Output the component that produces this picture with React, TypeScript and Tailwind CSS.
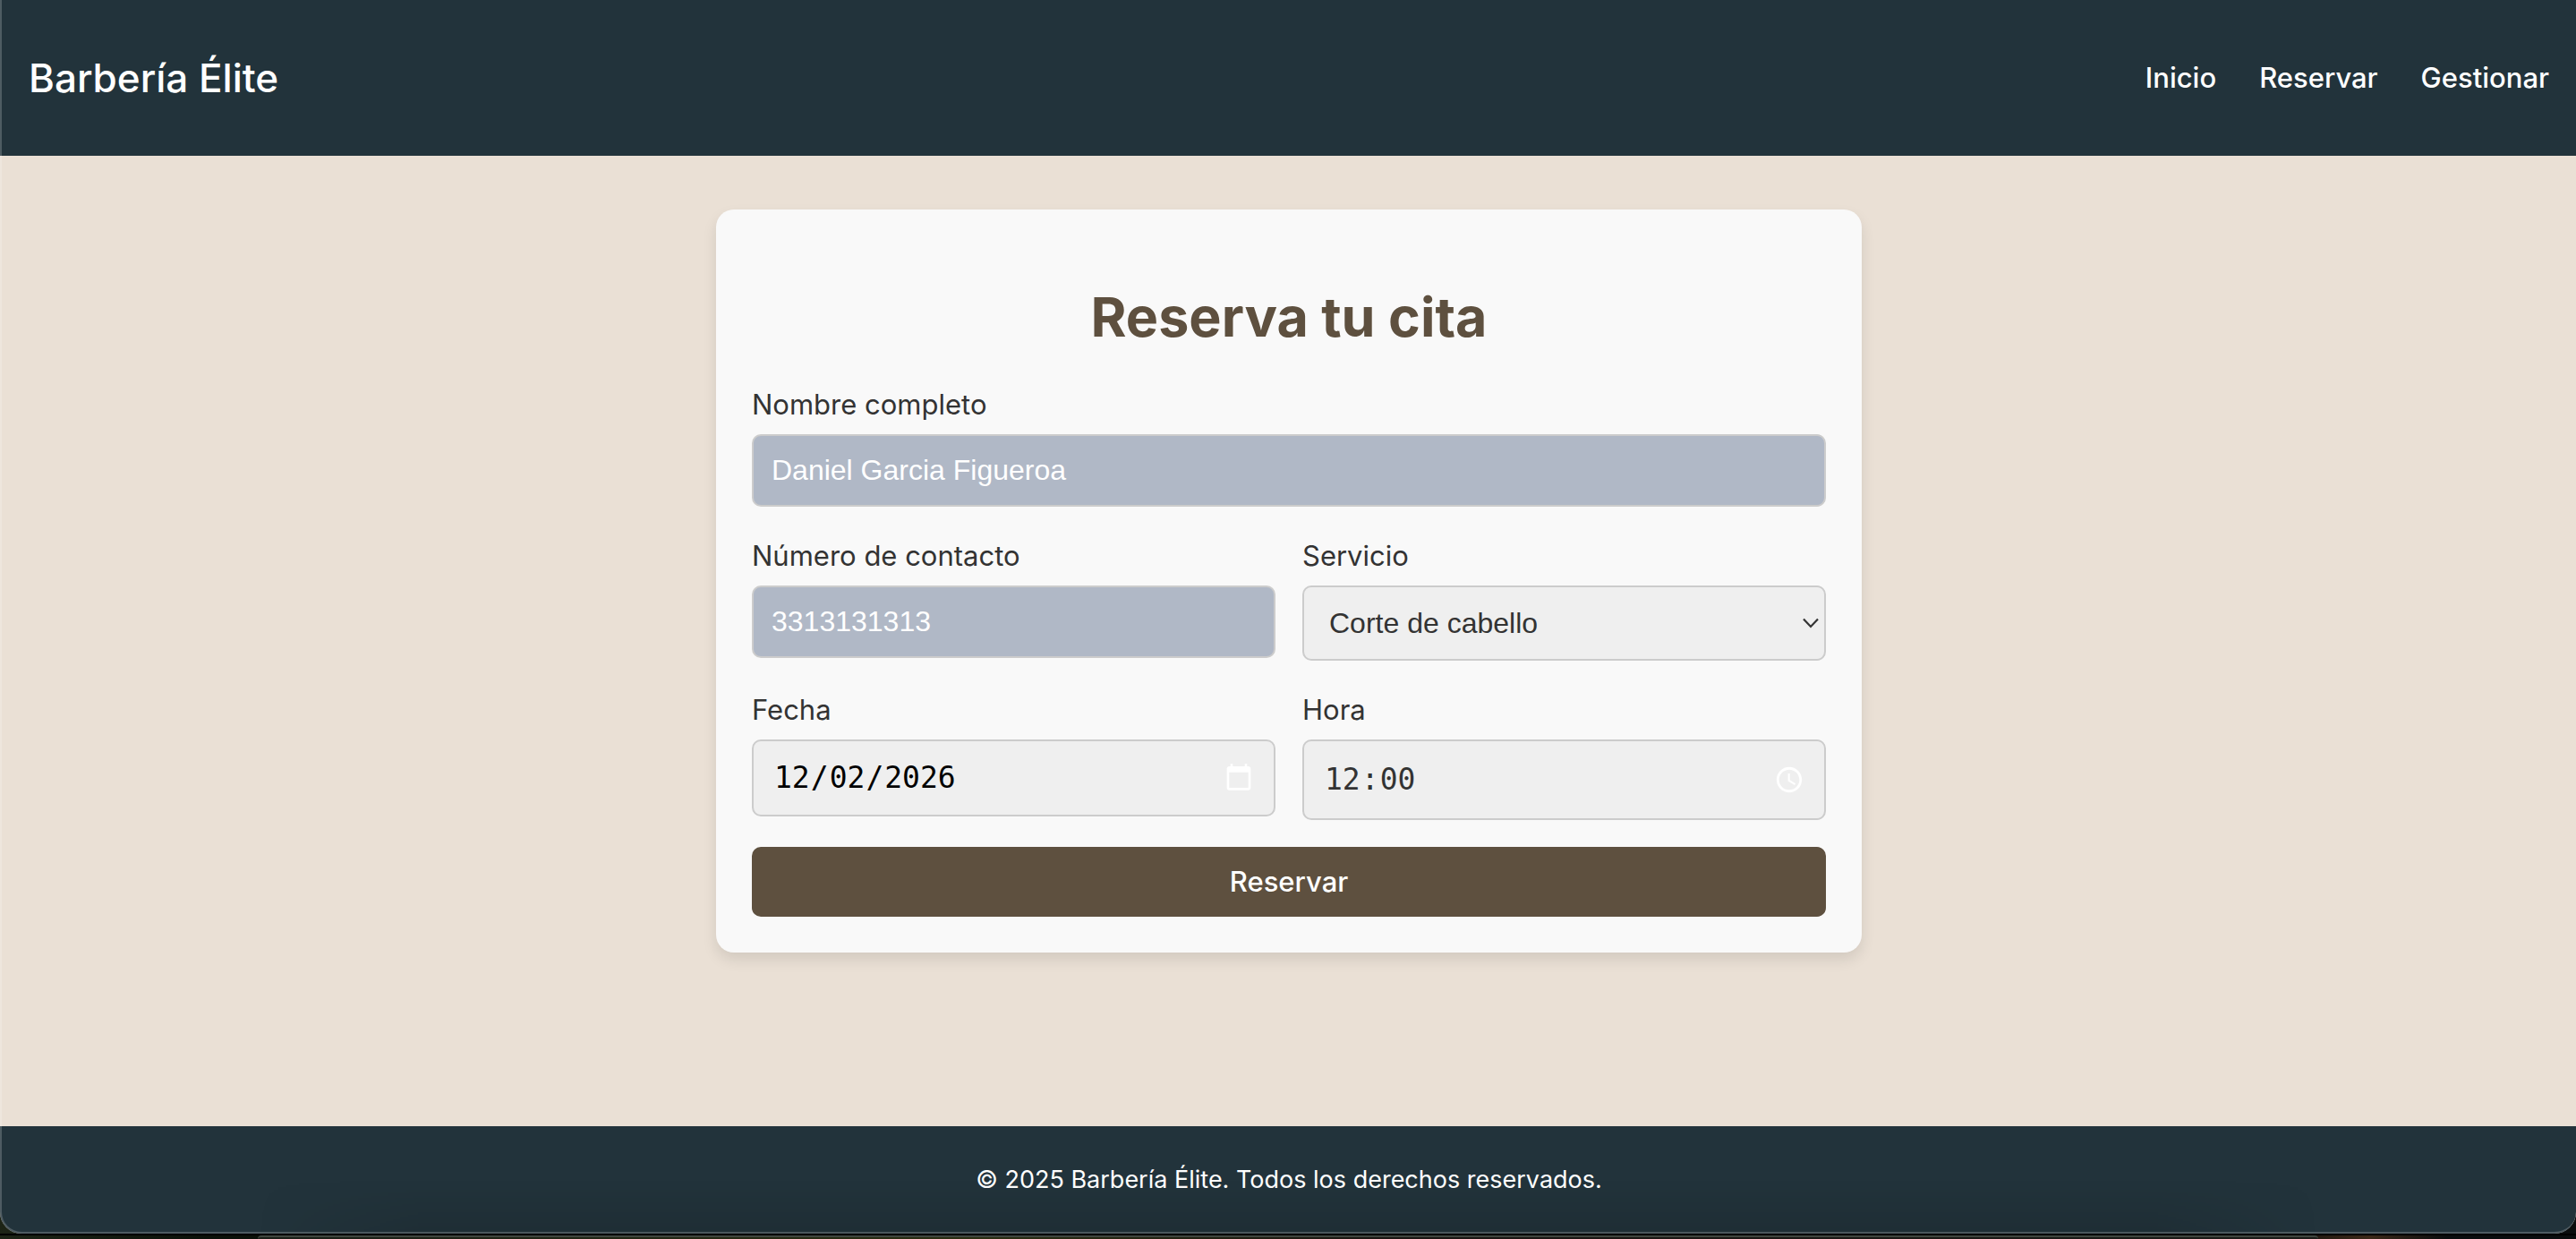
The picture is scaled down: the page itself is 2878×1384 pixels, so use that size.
import { ReactNode } from "react";

const labelClass = "mb-2 block text-[31px] leading-[50px] text-[#333]";
const autofilled =
  "block h-[81px] w-full rounded-[10px] border-2 border-[#ccc] bg-[#b0b8c6] px-5 font-['Liberation_Sans',sans-serif] text-[32px] text-white outline-none";
const pickerClass =
  "block w-full rounded-[10px] border-2 border-[#ccc] bg-[#efefef] px-[22px] font-['DejaVu_Sans_Mono',monospace] text-[33px] outline-none [&::-webkit-calendar-picker-indicator]:h-[34px] [&::-webkit-calendar-picker-indicator]:w-[34px] [&::-webkit-calendar-picker-indicator]:p-0 [&::-webkit-calendar-picker-indicator]:invert [&::-webkit-datetime-edit-ampm-field]:hidden";

function Field({ id, label, wide, children }: { id: string; label: string; wide?: boolean; children: ReactNode }) {
  return (
    <div className={wide ? "col-span-2" : "min-w-0"}>
      <label htmlFor={id} className={labelClass}>
        {label}
      </label>
      {children}
    </div>
  );
}

function Header() {
  return (
    <header className="flex h-[174px] shrink-0 items-center justify-between bg-[#22333b] pr-[30px] pl-8 text-white">
      <div className="text-[44px] font-medium">Barbería Élite</div>
      <nav className="flex gap-12 text-[31px] font-medium">
        <a href="#inicio">Inicio</a>
        <a href="#reservar">Reservar</a>
        <a href="#gestionar">Gestionar</a>
      </nav>
    </header>
  );
}

function BookingForm() {
  return (
    <form className="w-full max-w-[1280px] rounded-[20px] bg-[#f9f9f9] p-10 shadow-[0_8px_16px_rgba(0,0,0,0.1)]">
      <h1 className="mt-8 mb-[25px] text-center text-[61px] leading-[96px] font-bold text-[#5e503f]">
        Reserva tu cita
      </h1>
      <div className="grid grid-cols-2 items-start gap-[30px]">
        <Field id="nombre" label="Nombre completo" wide>
          <input id="nombre" type="text" defaultValue="Daniel Garcia Figueroa" className={autofilled} />
        </Field>
        <Field id="telefono" label="Número de contacto">
          <input id="telefono" type="tel" defaultValue="3313131313" className={autofilled} />
        </Field>
        <Field id="servicio" label="Servicio">
          <div className="relative">
            <select
              id="servicio"
              className="block h-[84px] w-full appearance-none rounded-[10px] border-2 border-[#ccc] bg-[#efefef] px-7 font-['Liberation_Sans',sans-serif] text-[32px] text-[#333] outline-none"
            >
              <option>Corte de cabello</option>
            </select>
            <svg
              viewBox="0 0 20 12"
              className="pointer-events-none absolute top-9 right-[7px] h-3 w-5"
              fill="none"
              stroke="#333"
              strokeWidth="2.2"
            >
              <path d="M2 1.5 10 10 18 1.5" />
            </svg>
          </div>
        </Field>
        <Field id="fecha" label="Fecha">
          <input id="fecha" type="date" defaultValue="2026-12-02" className={`${pickerClass} h-[86px] text-black`} />
        </Field>
        <Field id="hora" label="Hora">
          <input id="hora" type="time" defaultValue="12:00" className={`${pickerClass} h-[90px] text-[#333]`} />
        </Field>
        <button
          type="button"
          className="col-span-2 h-[78px] rounded-[10px] bg-[#5e503f] text-[31px] font-medium text-white"
        >
          Reservar
        </button>
      </div>
    </form>
  );
}

export default function App() {
  return (
    <div className="flex min-h-screen flex-col bg-[linear-gradient(90deg,#1d2416,#0b1109_8%,#0d0d0b_88%,#3a2818_92%,#0a0d0e_95%)] font-[Inter,sans-serif]">
      <div className="relative flex flex-1 flex-col overflow-hidden rounded-b-[24px] bg-[#eae0d5]">
        <Header />
        <main className="flex flex-1 flex-col items-center py-[60px] pr-10 pl-[42px]">
          <BookingForm />
        </main>
        <footer className="flex h-[120px] shrink-0 items-center justify-center bg-[#22333b] pl-[2px] text-[27px] text-white">
          <p>© 2025 Barbería Élite. Todos los derechos reservados.</p>
        </footer>
        <div className="pointer-events-none absolute inset-x-[10%] bottom-0 h-[60px] bg-linear-to-b from-transparent to-black/10 [mask-image:linear-gradient(90deg,transparent,#000_8%,#000_92%,transparent)]" />
        <div className="pointer-events-none absolute inset-0 rounded-b-[24px] border-b-2 border-l-2 border-white/20" />
      </div>
      <div className="h-[6px] bg-linear-to-b from-black from-35% to-transparent to-35% px-[10%] pt-[2px]">
        <div className="h-1 rounded-t-[4px] border-t-2 border-[#3f463f] bg-[linear-gradient(90deg,#1a1f18,#2b2f12_35%,#1b1613_55%,#1c1c18)]" />
      </div>
    </div>
  );
}
